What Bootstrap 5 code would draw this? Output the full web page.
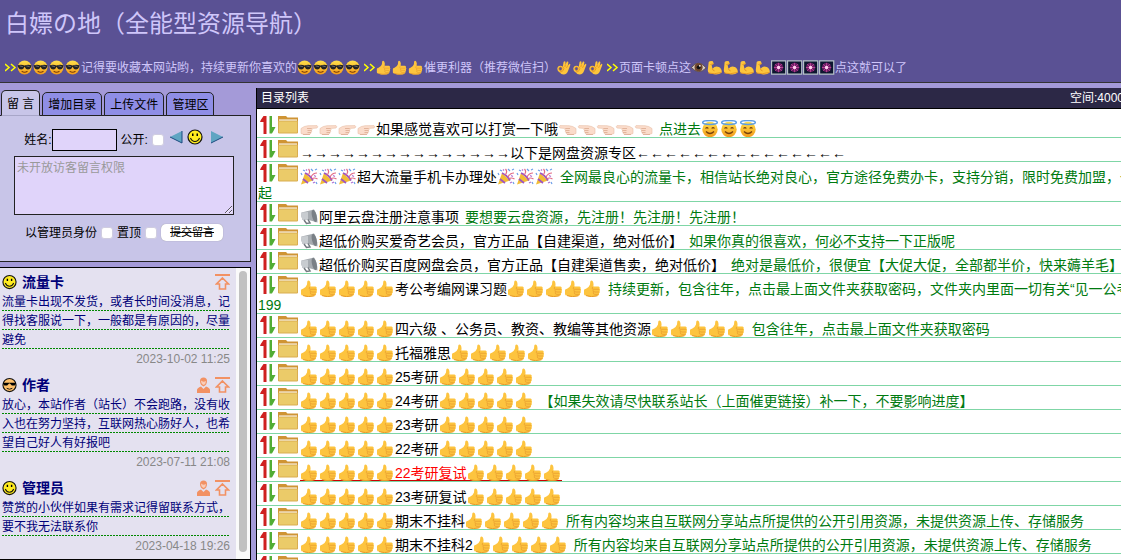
<!DOCTYPE html>
<html lang="zh-CN">
<head>
<meta charset="utf-8">
<meta name="viewport" content="width=device-width, initial-scale=1">
<title>白嫖の地（全能型资源导航）</title>
<link href="https://cdn.jsdelivr.net/npm/bootstrap@5.3.0/dist/css/bootstrap.min.css" rel="stylesheet">
<style>
body{background:#a49ad8;font:12px/16px "Liberation Sans","Noto Sans CJK SC",sans-serif;color:#000}
a{color:inherit;text-decoration:none}
svg{flex:none}
.top-bar{background:#5a5194;border-bottom:1px solid #333;color:#cfc6fa;padding:8px 5px 7px}
.top-bar h1{font-size:24px;line-height:32px;font-weight:400;margin:0 0 20px}
.top-links{gap:3px;height:15px}
.side{width:251px;padding-top:7px}
.tab-row{gap:2px;padding-left:1px;margin-bottom:-1px}
.tab-row .nav-link{border:1px solid #222;border-radius:5px 5px 0 0;background:#8f8ee6;color:#000;padding:4px 5px 2px;font-size:12px;line-height:16px;height:24px}
.tab-row .nav-link.active{height:26px;padding-top:5px;background:#c8c5e8;border-bottom-color:#a8a6c8}
.post-form{background:#c8c5e8;border:1px solid #222;border-left:0;height:147px;padding:13px 16px 0 14px}
.post-form input[type=text]{width:65px;height:22px;border:1px solid #000;background:#e0d4fa;padding:0 2px}
.post-form textarea{height:59px;border:1px solid #222;background:#e0d4fa;padding:2px;line-height:18px;margin:5px 0 9px;resize:vertical}
.post-form textarea::placeholder{color:#999}
.tick{appearance:none;width:12px;height:12px;background:#fff;border:1px solid #d0cde0;border-radius:3px;margin:0}
.face-pick{margin:0 0 6px 6px;gap:4px}
.send-btn{width:62px;height:17px;border:0;border-radius:5px;background:#fff;box-shadow:0 0 1px #888;font-size:11px;line-height:17px;padding:0;text-decoration:line-through;color:#000}
.msg-box{background:#e4e1f0;border:1px solid #000;border-left:0;margin-top:5px;height:calc(100vh - 267px);color:#000078}
.msg-list{padding:4px 6px 0 2px}
.msg-item{margin-bottom:6px}
.msg-head{height:20px;gap:5px}
.msg-head strong{font-size:14px;line-height:20px}
.msg-text{line-height:19px;margin:0;padding-top:1px;background:repeating-linear-gradient(90deg,transparent 0 2px,#e4e1f0 2px 3px),linear-gradient(transparent 18px,#080 18px) 0 0/100% 19px}
.msg-time{display:block;line-height:19px;color:#888;text-align:right}
.bar-track{width:14px;background:#fafafa;padding:3px 3px 7px}
.bar-thumb{height:100%;border-radius:4px;background:#c1c1c1}
.dir-panel{background:#fff;border-left:1px solid #000;margin:5px -20px 0 5px;min-width:0;height:calc(100vh - 88px)}
.dir-head{background:#2c2846;color:#fff;border-bottom:1px solid #000;margin-left:-1px;padding:2px 17px 2px 5px;height:21px}
.dir-rows{font-size:14px;line-height:16px;white-space:nowrap;padding-top:5px}
.dir-rows li{border-bottom:1px solid #7fd6a6;padding:2px 0 0 1px}
.dir-rows small{font-size:14px;color:#007a10;margin-left:2px}
.ic-sort,.ic-dir{height:18px;vertical-align:baseline}
.ic-sort{width:16px;margin-left:2px}
.ic-dir{width:20px;margin:0 2px}
.emo{height:17px;width:19px;vertical-align:-3px}
.x3{width:57px}.x4{width:76px}.x5{width:95px}
.top-bar .emo{height:15px;width:16px}
.top-bar .x3{width:48px}.top-bar .x4{width:64px}
.hot{color:#f00;background:linear-gradient(#c00,#c00) 0 100%/100% 1px no-repeat}
</style>
</head>
<body class="overflow-hidden vh-100">
<svg width="0" height="0" class="position-absolute" aria-hidden="true">
<defs>
<linearGradient id="gy" x2="0" y2="1"><stop stop-color="#ffe04a"/><stop offset="1" stop-color="#f39a1a"/></linearGradient>
<g id="thumb"><path d="M1 10.200Q1 9 3 8.700Q6 7.500 7 4.500L7.300 1.500Q8 0 9.600 1Q11 3 10.300 6.500H15.500Q17.200 7 16.500 8.500Q17.600 9.700 16.600 11Q17.300 12.400 16 13.500Q16.300 15.300 14.500 15.800Q12 17.300 6 16.700L3 15.600Q1 15.500 1 14Z" fill="#fdc43f"/><path d="M10 6.800Q7.700 8.700 10.500 9.300H16M10 9.500Q9.300 12 12 12H16M10.300 12Q9.800 14.500 12 14.400H15.500" fill="none" stroke="#e8a030" stroke-width=".8"/><path d="M3 15.600Q8 17.500 14.500 15.800" fill="none" stroke="#e79a28"/></g>
<g id="cool"><circle cx="9" cy="8.500" r="8.200" fill="url(#gy)"/><path d="M.8 5.800Q5 4.600 9 6Q13 4.600 17.200 5.800L16.500 8.500Q15.500 11 13 11Q10.200 11 9 7.700Q7.800 11 5 11Q2.500 11 1.500 8.500Z" fill="#222"/><path d="M3 6.500L7 7.500M11 6.500L15 7.500" stroke="#777"/><path d="M5.500 12.800Q9 15.400 12.500 12.800" fill="none" stroke="#7a3b08" stroke-width="1.200"/></g>
<g id="halo"><circle cx="9" cy="9.500" r="7.700" fill="url(#gy)"/><ellipse cx="9" cy="2.500" rx="7.300" ry="1.900" fill="none" stroke="#5b9de6" stroke-width="1.500"/><path d="M4.500 8.500Q6 6.600 7.300 8.500M10.700 8.500Q12 6.600 13.500 8.500M5 11.500Q9 15.500 13 11.500" fill="none" stroke="#76400d" stroke-width="1.200"/></g>
<g id="point"><path d="M1 8.500Q4 6 8 5.700L17 5.600Q18.500 6.700 17 8L11.500 8.500Q12.800 9.500 11.500 10.500Q12.300 12 11 12.500Q11 14 9.500 14.200L4 14.500L1 13.500Z" fill="#fbdccb" stroke="#e8bfa8" stroke-width=".6"/><path d="M7 8.500H11.500M7.500 10.500H11.500M7.500 12.500H11M3 14.500H10" stroke="#d9a488" stroke-width=".7"/></g>
<g id="party"><path d="M1 16.500L5 5L13 12.500Z" fill="#f2bd35"/><path d="M3 11L8 15M5 5Q10 7 13 12.500" stroke="#9c54c4" stroke-width="1.800" fill="none"/><path d="M8 7Q11 4 8.500 1M11 9Q13 5 17 5M12 11Q14 9 17.500 11" stroke="#e26b85" stroke-width="1.200" fill="none"/><path d="M3 2l2 1M11 1l2 2M15 2l2-1M16 14l1 2M1 5l1 2" stroke="#6b9ee8" stroke-width="1.200"/><path d="M14 7.500l2 1M6 1.500l1 1M13 15l2-1" stroke="#b070d4" stroke-width="1.300"/></g>
<g id="mega"><path d="M1.500 4.500L14 1.500Q17.500 6 17.500 14.500L7 11.500L2.500 12Q.5 8 1.500 4.500Z" fill="#a6abb0"/><path d="M1.500 4.500L8 4V11L2.500 12Q.5 8 1.500 4.500Z" fill="#c8ccd0"/><ellipse cx="14.300" cy="8" rx="2.300" ry="6.300" transform="rotate(-14 14.300 8)" fill="#7a8086"/><path d="M4 12L6.500 15.500L10 15L8 11.500" fill="none" stroke="#73797f" stroke-width="1.500"/></g>
<g id="ok"><path d="M8 7.500L9 2Q10 .3 11.300 1.800L11.200 5L13 1.500Q14.500 .8 14.700 2.500L14 6L16 4Q17.300 4 17 5.500L14.500 12Q13 16.500 9 16.700Q6 16.700 4.500 14.500Q1.500 13 1.500 10Q2 6.500 5 6.300Q7 6.300 8 7.500Z" fill="#fdc53c"/><ellipse cx="5.300" cy="10" rx="1.900" ry="2.100" fill="#5a5194" stroke="#df8a1c" stroke-width=".7"/><path d="M8 7.500Q10.500 9.500 8.500 12Q7.500 13.500 4.500 14M11.200 5L10.500 8M14 6L12.500 9" fill="none" stroke="#dc871a" stroke-width=".8"/></g>
<g id="arm"><path d="M2 2Q3.500 0 7 1L8 4L5.500 5.500L6.500 10Q10 6 14 8Q18 10 17.500 14.500Q13 18 6 16Q.5 15.500 1 11Z" fill="#fdc53c"/><path d="M6.500 10Q6.500 12 9 12.500M4 5L8 4M1.500 15Q8 17 17 14.500" fill="none" stroke="#e18f22"/></g>
<g id="spark"><path d="M.7.7H17.500V16.300H.7Z" fill="#0d1630" stroke="#b6c2c8" stroke-width="1.400"/><circle cx="9" cy="8.500" r="5.500" fill="#a52582" opacity=".6"/><path d="M9 3V14M3.500 8.500H14.500M5 4.500L13 12.500M13 4.500L5 12.500" stroke="#dc4fae" stroke-width=".8"/><circle cx="9" cy="8.500" r="2" fill="#ffd2ef"/></g>
</defs>
<symbol id="thumb5" viewBox="0 0 95 17"><use href="#thumb"/><use href="#thumb" x="19"/><use href="#thumb" x="38"/><use href="#thumb" x="57"/><use href="#thumb" x="76"/></symbol>
<symbol id="thumb3" viewBox="0 0 57 17"><use href="#thumb"/><use href="#thumb" x="19"/><use href="#thumb" x="38"/></symbol>
<symbol id="cool4" viewBox="0 0 76 17"><use href="#cool"/><use href="#cool" x="19"/><use href="#cool" x="38"/><use href="#cool" x="57"/></symbol>
<symbol id="halo3" viewBox="0 0 57 17"><use href="#halo"/><use href="#halo" x="19"/><use href="#halo" x="38"/></symbol>
<symbol id="party3" viewBox="0 0 57 17"><use href="#party"/><use href="#party" x="19"/><use href="#party" x="38"/></symbol>
<symbol id="ok3" viewBox="0 0 57 17"><use href="#ok"/><use href="#ok" x="19"/><use href="#ok" x="38"/></symbol>
<symbol id="arm4" viewBox="0 0 76 17"><use href="#arm"/><use href="#arm" x="19"/><use href="#arm" x="38"/><use href="#arm" x="57"/></symbol>
<symbol id="spark4" viewBox="0 0 76 17"><use href="#spark"/><use href="#spark" x="19"/><use href="#spark" x="38"/><use href="#spark" x="57"/></symbol>
<symbol id="point4" viewBox="0 0 76 17"><use href="#point"/><use href="#point" x="19"/><use href="#point" x="38"/><use href="#point" x="57"/></symbol>
<symbol id="back5" viewBox="0 0 95 17"><g transform="matrix(-1 0 0 1 95 0)"><use href="#point"/><use href="#point" x="19"/><use href="#point" x="38"/><use href="#point" x="57"/><use href="#point" x="76"/></g></symbol>
<symbol id="mega1" viewBox="0 0 19 17"><use href="#mega"/></symbol>
<symbol id="eye" viewBox="0 0 19 17"><path d="M.5 8.500Q9-2 18 9Q9 18 .5 8.500Z" fill="#d8cec6" stroke="#5b4536"/><circle cx="9" cy="8.300" r="4.800" fill="#70472d"/><circle cx="9" cy="8.300" r="2.300" fill="#111"/><circle cx="10.500" cy="6.500" r="1" fill="#fff"/></symbol>
<symbol id="sort" viewBox="0 0 16 18"><path d="M3.500 0H6.500V18H3.500V6H0Q.5 4 3.500 0Z" fill="#cf2020"/><path d="M9.500 0H12V11H15.500Q14 14 12 17.500H9.500Z" fill="#52ad35"/></symbol>
<symbol id="folder" viewBox="0 0 20 18"><path d="M0 0H8L9.500 1.500H20V5H0Z" fill="#cf9434"/><path d="M1 3.500H19V6H1Z" fill="#fff"/><path d="M.5 5H19.500V17H.5Z" fill="#ebcb69" stroke="#d9ad50"/></symbol>
<symbol id="chev" viewBox="0 0 12 15"><path d="M0 4L4 7.500L0 11M6 4L10 7.500L6 11" fill="none" stroke="#ff0" stroke-width="1.500"/></symbol>
<symbol id="smile" viewBox="0 0 16 16"><circle cx="8" cy="8" r="7" fill="#ffeb1f" stroke="#111" stroke-width="1.200"/><path d="M5 4.500H6.500V7H5ZM9.500 4.500H11V7H9.500Z"/><path d="M3.500 9Q5 12.500 8 12.500Q11 12.500 12.500 9" fill="none" stroke="#111" stroke-width="1.100"/></symbol>
<symbol id="shades" viewBox="0 0 16 16"><circle cx="8" cy="8" r="7" fill="#ffc06a" stroke="#111" stroke-width="1.200"/><path d="M1 5.500H15V6.500L13.500 8.500H10.500L8.500 6.500H7.500L5.500 8.500H2.500L1 6.500Z"/><path d="M5 11.500Q8 13.500 11 11.500" fill="none" stroke="#111"/></symbol>
<symbol id="upto" viewBox="0 0 15 16"><path d="M0 1H15" stroke="#f29163" stroke-width="2"/><path d="M7.500 4L13.500 10H10.500V15H4.500V10H1.500Z" fill="none" stroke="#f29163" stroke-width="1.600"/></symbol>
<symbol id="person" viewBox="0 0 13 16"><path d="M3 4Q3 .5 6.500 .5Q10 .5 10 4Q10 8 6.500 9.500Q3 8 3 4Z" fill="#f29163"/><path d="M4 3.500Q6 5.500 9 4Q9 7 6.500 8Q4 7 4 3.500Z" fill="#f9cdb9"/><path d="M0 16V13Q0 11 4 9.500L6.500 12L9 9.500Q13 11 13 13V16Z" fill="#f29163"/></symbol>
</svg>

<header class="top-bar text-nowrap">
  <h1>白嫖の地（全能型资源导航）</h1>
  <nav class="top-links d-flex align-items-center" aria-label="公告">
    <a href="#" class="d-flex align-items-center"><svg width="12" height="15"><use href="#chev"/></svg><svg class="emo x4"><use href="#cool4"/></svg>记得要收藏本网站哟，持续更新你喜欢的<svg class="emo x4"><use href="#cool4"/></svg></a>
    <a href="#" class="d-flex align-items-center"><svg width="12" height="15"><use href="#chev"/></svg><svg class="emo x3"><use href="#thumb3"/></svg>催更利器（推荐微信扫）<svg class="emo x3"><use href="#ok3"/></svg></a>
    <a href="#" class="d-flex align-items-center"><svg width="12" height="15"><use href="#chev"/></svg>页面卡顿点这<svg class="emo"><use href="#eye"/></svg><svg class="emo x4"><use href="#arm4"/></svg><svg class="emo x4"><use href="#spark4"/></svg>点这就可以了</a>
  </nav>
</header>

<div class="d-flex">
  <aside class="side flex-shrink-0">
    <ul class="tab-row nav align-items-end position-relative flex-nowrap text-nowrap">
      <li><a class="nav-link active" href="#">留 言</a></li>
      <li><a class="nav-link" href="#">增加目录</a></li>
      <li><a class="nav-link" href="#">上传文件</a></li>
      <li><a class="nav-link" href="#">管理区</a></li>
    </ul>
    <form class="post-form text-nowrap">
      <div class="d-flex align-items-center justify-content-center">
        <label for="who">姓名:</label><input type="text" id="who">
        <label for="open" class="mx-1">公开:</label><input class="tick" type="checkbox" id="open">
        <div class="face-pick d-flex">
          <a href="#" class="d-flex" aria-label="上一个"><svg width="13" height="16"><path d="M0 8L12 2V14Z" fill="#5fa5c2"/><path d="M0 8L12 14V2" fill="none" stroke="#1c4b80"/></svg></a>
          <svg width="16" height="16"><use href="#smile"/></svg>
          <a href="#" class="d-flex ms-1" aria-label="下一个"><svg width="13" height="16"><path d="M0 2L12 8L0 14Z" fill="#5fa5c2"/><path d="M0 14L12 8" stroke="#1c4b80"/></svg></a>
        </div>
      </div>
      <textarea class="d-block w-100" placeholder="未开放访客留言权限" aria-label="留言内容"></textarea>
      <div class="d-flex align-items-center justify-content-center gap-1">
        <label for="admin">以管理员身份</label><input class="tick" type="checkbox" id="admin">
        <label for="pin">置顶</label><input class="tick" type="checkbox" id="pin">
        <button class="send-btn" type="button">提交留言</button>
      </div>
    </form>
    <section class="msg-box d-flex overflow-hidden">
      <div class="msg-list flex-fill">
        <article class="msg-item">
          <div class="msg-head d-flex align-items-center"><svg width="15" height="16"><use href="#smile"/></svg><strong class="me-auto">流量卡</strong><svg width="15" height="16"><use href="#upto"/></svg></div>
          <p class="msg-text">流量卡出现不发货，或者长时间没消息，记得找客服说一下，一般都是有原因的，尽量避免</p>
          <time class="msg-time">2023-10-02 11:25</time>
        </article>
        <article class="msg-item">
          <div class="msg-head d-flex align-items-center"><svg width="15" height="16"><use href="#shades"/></svg><strong class="me-auto">作者</strong><svg width="13" height="16"><use href="#person"/></svg><svg width="15" height="16"><use href="#upto"/></svg></div>
          <p class="msg-text">放心，本站作者（站长）不会跑路，没有收入也在努力坚持，互联网热心肠好人，也希望自己好人有好报吧</p>
          <time class="msg-time">2023-07-11 21:08</time>
        </article>
        <article class="msg-item">
          <div class="msg-head d-flex align-items-center"><svg width="15" height="16"><use href="#smile"/></svg><strong class="me-auto">管理员</strong><svg width="13" height="16"><use href="#person"/></svg><svg width="15" height="16"><use href="#upto"/></svg></div>
          <p class="msg-text">赞赏的小伙伴如果有需求记得留联系方式，要不我无法联系你</p>
          <time class="msg-time">2023-04-18 19:26</time>
        </article>
      </div>
      <div class="bar-track flex-shrink-0"><div class="bar-thumb"></div></div>
    </section>
  </aside>

  <main class="dir-panel flex-fill overflow-hidden">
    <div class="dir-head d-flex justify-content-between"><span>目录列表</span><span>空间:4000</span></div>
    <ul class="dir-rows list-unstyled mb-0">
      <li><svg class="ic-sort"><use href="#sort"/></svg><svg class="ic-dir"><use href="#folder"/></svg><a href="#"><svg class="emo x4"><use href="#point4"/></svg>如果感觉喜欢可以打赏一下哦<svg class="emo x5"><use href="#back5"/></svg></a> <small>点进去<svg class="emo x3"><use href="#halo3"/></svg></small></li>
      <li><svg class="ic-sort"><use href="#sort"/></svg><svg class="ic-dir"><use href="#folder"/></svg><a href="#">→→→→→→→→→→→→→→→以下是网盘资源专区←←←←←←←←←←←←←←←</a></li>
      <li><svg class="ic-sort"><use href="#sort"/></svg><svg class="ic-dir"><use href="#folder"/></svg><a href="#"><svg class="emo x3"><use href="#party3"/></svg>超大流量手机卡办理处<svg class="emo x3"><use href="#party3"/></svg></a> <small>全网最良心的流量卡，相信站长绝对良心，官方途径免费办卡，支持分销，限时免费加盟，一<br>起</small></li>
      <li><svg class="ic-sort"><use href="#sort"/></svg><svg class="ic-dir"><use href="#folder"/></svg><a href="#"><svg class="emo"><use href="#mega1"/></svg>阿里云盘注册注意事项</a> <small>要想要云盘资源，先注册！先注册！先注册！</small></li>
      <li><svg class="ic-sort"><use href="#sort"/></svg><svg class="ic-dir"><use href="#folder"/></svg><a href="#"><svg class="emo"><use href="#mega1"/></svg>超低价购买爱奇艺会员，官方正品【自建渠道，绝对低价】</a> <small>如果你真的很喜欢，何必不支持一下正版呢</small></li>
      <li><svg class="ic-sort"><use href="#sort"/></svg><svg class="ic-dir"><use href="#folder"/></svg><a href="#"><svg class="emo"><use href="#mega1"/></svg>超低价购买百度网盘会员，官方正品【自建渠道售卖，绝对低价】</a> <small>绝对是最低价，很便宜【大促大促，全部都半价，快来薅羊毛】</small></li>
      <li><svg class="ic-sort"><use href="#sort"/></svg><svg class="ic-dir"><use href="#folder"/></svg><a href="#"><svg class="emo x5"><use href="#thumb5"/></svg>考公考编网课习题<svg class="emo x5"><use href="#thumb5"/></svg></a> <small>持续更新，包含往年，点击最上面文件夹获取密码，文件夹内里面一切有关“见一公考<br>199</small></li>
      <li><svg class="ic-sort"><use href="#sort"/></svg><svg class="ic-dir"><use href="#folder"/></svg><a href="#"><svg class="emo x5"><use href="#thumb5"/></svg>四六级 、公务员、教资、教编等其他资源<svg class="emo x5"><use href="#thumb5"/></svg></a> <small>包含往年，点击最上面文件夹获取密码</small></li>
      <li><svg class="ic-sort"><use href="#sort"/></svg><svg class="ic-dir"><use href="#folder"/></svg><a href="#"><svg class="emo x5"><use href="#thumb5"/></svg>托福雅思<svg class="emo x5"><use href="#thumb5"/></svg></a></li>
      <li><svg class="ic-sort"><use href="#sort"/></svg><svg class="ic-dir"><use href="#folder"/></svg><a href="#"><svg class="emo x5"><use href="#thumb5"/></svg>25考研<svg class="emo x5"><use href="#thumb5"/></svg></a></li>
      <li><svg class="ic-sort"><use href="#sort"/></svg><svg class="ic-dir"><use href="#folder"/></svg><a href="#"><svg class="emo x5"><use href="#thumb5"/></svg>24考研<svg class="emo x5"><use href="#thumb5"/></svg></a> <small>【如果失效请尽快联系站长（上面催更链接）补一下，不要影响进度】</small></li>
      <li><svg class="ic-sort"><use href="#sort"/></svg><svg class="ic-dir"><use href="#folder"/></svg><a href="#"><svg class="emo x5"><use href="#thumb5"/></svg>23考研<svg class="emo x5"><use href="#thumb5"/></svg></a></li>
      <li><svg class="ic-sort"><use href="#sort"/></svg><svg class="ic-dir"><use href="#folder"/></svg><a href="#"><svg class="emo x5"><use href="#thumb5"/></svg>22考研<svg class="emo x5"><use href="#thumb5"/></svg></a></li>
      <li><svg class="ic-sort"><use href="#sort"/></svg><svg class="ic-dir"><use href="#folder"/></svg><a href="#" class="hot"><svg class="emo x5"><use href="#thumb5"/></svg>22考研复试<svg class="emo x5"><use href="#thumb5"/></svg></a></li>
      <li><svg class="ic-sort"><use href="#sort"/></svg><svg class="ic-dir"><use href="#folder"/></svg><a href="#"><svg class="emo x5"><use href="#thumb5"/></svg>23考研复试<svg class="emo x5"><use href="#thumb5"/></svg></a></li>
      <li><svg class="ic-sort"><use href="#sort"/></svg><svg class="ic-dir"><use href="#folder"/></svg><a href="#"><svg class="emo x5"><use href="#thumb5"/></svg>期末不挂科<svg class="emo x5"><use href="#thumb5"/></svg></a> <small>所有内容均来自互联网分享站点所提供的公开引用资源，未提供资源上传、存储服务</small></li>
      <li><svg class="ic-sort"><use href="#sort"/></svg><svg class="ic-dir"><use href="#folder"/></svg><a href="#"><svg class="emo x5"><use href="#thumb5"/></svg>期末不挂科2<svg class="emo x5"><use href="#thumb5"/></svg></a> <small>所有内容均来自互联网分享站点所提供的公开引用资源，未提供资源上传、存储服务</small></li>
      <li><svg class="ic-sort"><use href="#sort"/></svg><svg class="ic-dir"><use href="#folder"/></svg></li>
    </ul>
  </main>
</div>
<script src="https://cdn.jsdelivr.net/npm/bootstrap@5.3.0/dist/js/bootstrap.bundle.min.js"></script>
</body>
</html>
